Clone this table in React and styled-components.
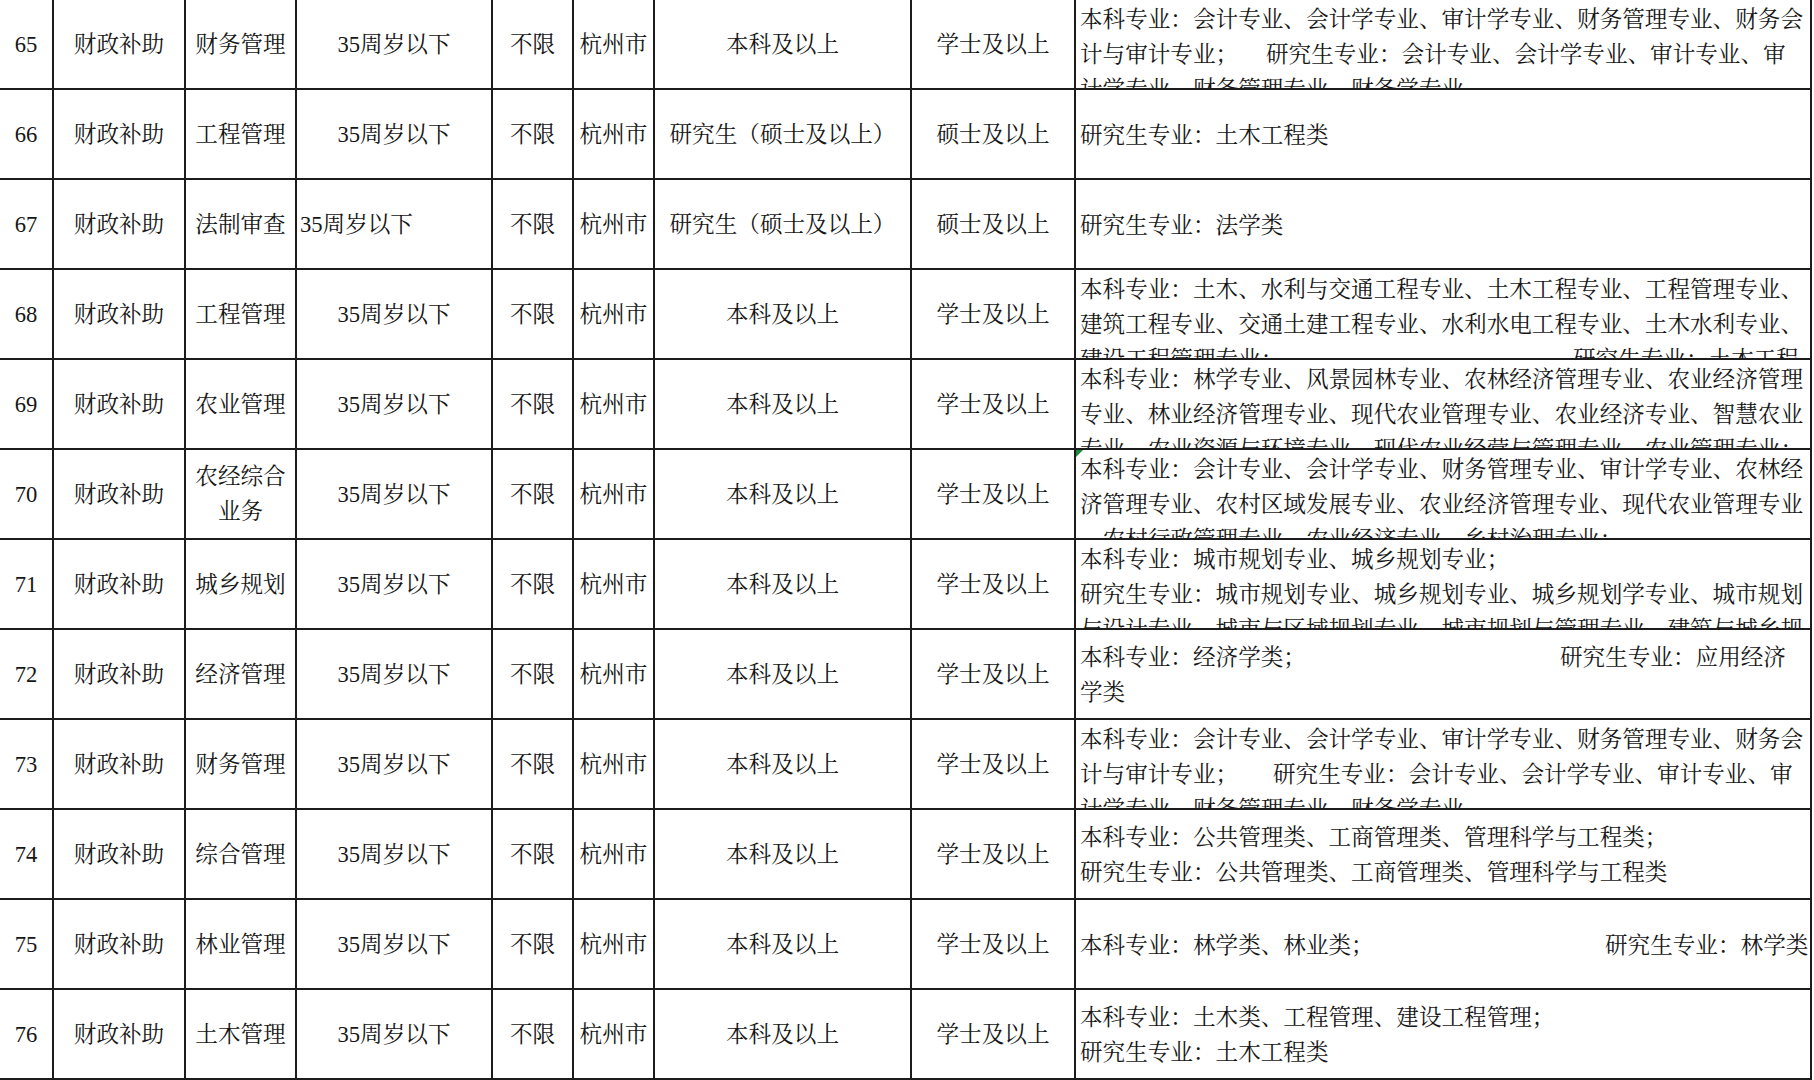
import React from "react";
import styled, { createGlobalStyle } from "styled-components";

const Global = createGlobalStyle`
  html, body { margin: 0; padding: 0; background: #ffffff; }
  body { width: 1814px; height: 1080px; overflow: hidden; }
`;

const FONT = `"Liberation Serif", "Noto Serif CJK SC", "Noto Sans CJK SC", serif`;
const COLS = "54px 132px 111px 196px 81px 81px 257px 164px 736px";

const Table = styled.div`
  display: flex;
  flex-direction: column;
  width: 1812px;
  font-family: ${FONT};
  font-size: 22.6px;
  color: #161616;
`;

const Row = styled.div`
  display: grid;
  grid-template-columns: ${COLS};
  height: 90px;
`;

const Cell = styled.div`
  position: relative;
  box-sizing: border-box;
  border-right: 2px solid #1c1c1c;
  border-bottom: 2px solid #1c1c1c;
  display: flex;
  flex-direction: column;
  justify-content: safe center;
  align-items: ${(p) => (p.$left ? "flex-start" : "center")};
  text-align: ${(p) => (p.$left ? "left" : "center")};
  padding: ${(p) => (p.$left ? "0 0 0 3px" : "0 2px")};
  line-height: 35px;
  overflow: hidden;
`;

const SpecCell = styled(Cell)`
  align-items: stretch;
  text-align: left;
  padding: 2px 2px 0 4px;
`;

const Line = styled.div`
  display: flex;
  white-space: nowrap;
  line-height: 35px;
  flex-shrink: 0;
`;

const Lead = styled.span`
  display: inline-block;
  flex-shrink: 0;
  width: ${(p) => p.$w}px;
  white-space: nowrap;
`;

const Flag = styled.span`
  position: absolute;
  top: 0;
  left: 0;
  width: 0;
  height: 0;
  border-top: 7px solid #1f8a3c;
  border-right: 7px solid transparent;
`;

const rows = [
  {
    no: "65", job: "财务管理", edu: "本科及以上", deg: "学士及以上",
    spec: [
      ["本科专业：会计专业、会计学专业、审计学专业、财务管理专业、财务会"],
      ["计与审计专业；", "研究生专业：会计专业、会计学专业、审计专业、审", 186],
      ["计学专业、财务管理专业、财务学专业"],
    ],
  },
  {
    no: "66", job: "工程管理", edu: "研究生（硕士及以上）", deg: "硕士及以上",
    spec: [["研究生专业：土木工程类"]],
  },
  {
    no: "67", job: "法制审查", edu: "研究生（硕士及以上）", deg: "硕士及以上", ageLeft: true,
    spec: [["研究生专业：法学类"]],
  },
  {
    no: "68", job: "工程管理", edu: "本科及以上", deg: "学士及以上",
    spec: [
      ["本科专业：土木、水利与交通工程专业、土木工程专业、工程管理专业、"],
      ["建筑工程专业、交通土建工程专业、水利水电工程专业、土木水利专业、"],
      ["建设工程管理专业；", "研究生专业：土木工程", 493],
    ],
  },
  {
    no: "69", job: "农业管理", edu: "本科及以上", deg: "学士及以上",
    spec: [
      ["本科专业：林学专业、风景园林专业、农林经济管理专业、农业经济管理"],
      ["专业、林业经济管理专业、现代农业管理专业、农业经济专业、智慧农业"],
      ["专业、农业资源与环境专业、现代农业经营与管理专业、农业管理专业；"],
    ],
  },
  {
    no: "70", job: ["农经综合", "业务"], edu: "本科及以上", deg: "学士及以上", flag: true,
    spec: [
      ["本科专业：会计专业、会计学专业、财务管理专业、审计学专业、农林经"],
      ["济管理专业、农村区域发展专业、农业经济管理专业、现代农业管理专业"],
      ["、农村行政管理专业、农业经济专业、乡村治理专业；"],
    ],
  },
  {
    no: "71", job: "城乡规划", edu: "本科及以上", deg: "学士及以上",
    spec: [
      ["本科专业：城市规划专业、城乡规划专业；"],
      ["研究生专业：城市规划专业、城乡规划专业、城乡规划学专业、城市规划"],
      ["与设计专业、城市与区域规划专业、城市规划与管理专业、建筑与城乡规"],
    ],
  },
  {
    no: "72", job: "经济管理", edu: "本科及以上", deg: "学士及以上",
    spec: [
      ["本科专业：经济学类；", "研究生专业：应用经济", 480],
      ["学类"],
    ],
  },
  {
    no: "73", job: "财务管理", edu: "本科及以上", deg: "学士及以上",
    spec: [
      ["本科专业：会计专业、会计学专业、审计学专业、财务管理专业、财务会"],
      ["计与审计专业；", "研究生专业：会计专业、会计学专业、审计专业、审", 193],
      ["计学专业、财务管理专业、财务学专业"],
    ],
  },
  {
    no: "74", job: "综合管理", edu: "本科及以上", deg: "学士及以上",
    spec: [
      ["本科专业：公共管理类、工商管理类、管理科学与工程类；"],
      ["研究生专业：公共管理类、工商管理类、管理科学与工程类"],
    ],
  },
  {
    no: "75", job: "林业管理", edu: "本科及以上", deg: "学士及以上",
    spec: [["本科专业：林学类、林业类；", "研究生专业：林学类", 525]],
  },
  {
    no: "76", job: "土木管理", edu: "本科及以上", deg: "学士及以上",
    spec: [
      ["本科专业：土木类、工程管理、建设工程管理；"],
      ["研究生专业：土木工程类"],
    ],
  },
];

function SpecLine({ parts }) {
  const [first, second, lead] = parts;
  if (second) {
    return (
      <Line>
        <Lead $w={lead}>{first}</Lead>
        <span>{second}</span>
      </Line>
    );
  }
  return <Line>{first}</Line>;
}

export default function App() {
  return (
    <>
      <Global />
      <Table>
        {rows.map((r) => (
          <Row key={r.no}>
            <Cell>{r.no}</Cell>
            <Cell>财政补助</Cell>
            <Cell>
              {Array.isArray(r.job)
                ? r.job.map((t) => <Line key={t}>{t}</Line>)
                : r.job}
            </Cell>
            <Cell $left={r.ageLeft}>35周岁以下</Cell>
            <Cell>不限</Cell>
            <Cell>杭州市</Cell>
            <Cell>{r.edu}</Cell>
            <Cell>{r.deg}</Cell>
            <SpecCell>
              {r.flag && <Flag />}
              {r.spec.map((p, i) => (
                <SpecLine key={i} parts={p} />
              ))}
            </SpecCell>
          </Row>
        ))}
      </Table>
    </>
  );
}
